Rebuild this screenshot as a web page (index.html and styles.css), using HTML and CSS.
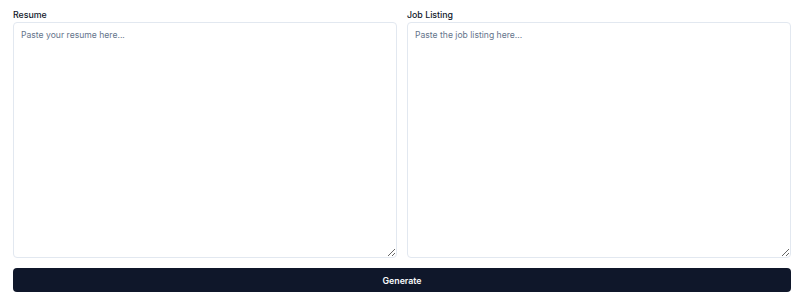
FILE: index.html
```html
<!DOCTYPE html>
<html lang="en">
<head>
    <meta charset="UTF-8">
    <meta name="viewport" content="width=device-width, initial-scale=1.0">
    <title>Resume Tailor</title>
    <link rel="stylesheet" href="styles.css">
</head>

<body>
    <div class="app">
        <div class="fields">
            <div class="field">
                <label for="resume">Resume</label>
                <textarea id="resume" placeholder="Paste your resume here..."></textarea>
            </div>
            <div class="field">
                <label for="listing">Job Listing</label>
                <textarea id="listing" placeholder="Paste the job listing here..."></textarea>
            </div>
        </div>
        <button class="generate">Generate</button>
    </div>
</body>

</html>
```

FILE: styles.css
```css
body {
    margin: 0;
    background: #ffffff;
    font-family: Inter, 'Noto Sans', sans-serif;
    color: #0f172a;
}

.app {
    padding: 8px 9px 0 13px;
}

.fields {
    display: grid;
    grid-template-columns: 1fr 1fr;
    gap: 10px;
}

.field {
    display: flex;
    flex-direction: column;
}

label {
    font-size: 8.8px;
    font-weight: 500;
    line-height: 13px;
    margin-bottom: 1px;
}

textarea {
    height: 236px;
    box-sizing: border-box;
    padding: 6px 7px;
    border: 1px solid #e2e8f0;
    border-radius: 4px;
    font-family: inherit;
    font-size: 8.6px;
    line-height: 13px;
    color: #0f172a;
    resize: vertical;
}

textarea::placeholder {
    color: #64748b;
}

.generate {
    display: block;
    width: 100%;
    height: 24px;
    margin-top: 10px;
    border: none;
    border-radius: 4px;
    background-color: #0f172a;
    color: #f8fafc;
    font-family: inherit;
    font-size: 8.8px;
    font-weight: 600;
    cursor: pointer;
}
```
